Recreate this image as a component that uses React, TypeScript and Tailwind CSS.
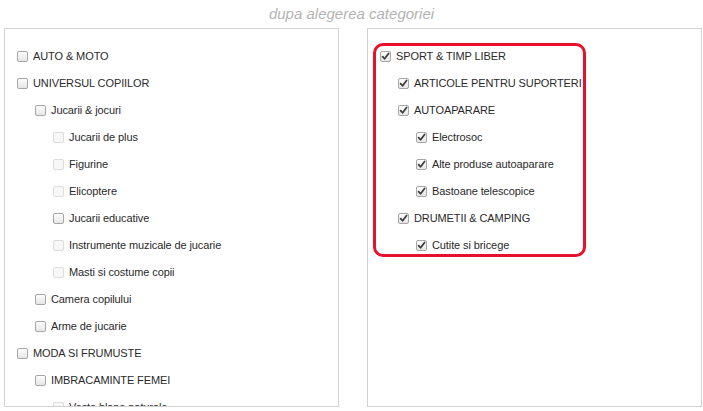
type Item = { label: string; level: number; checked?: boolean; disabled?: boolean };

const leftItems: Item[] = [
  { label: "AUTO & MOTO", level: 0 },
  { label: "UNIVERSUL COPIILOR", level: 0 },
  { label: "Jucarii & jocuri", level: 1 },
  { label: "Jucarii de plus", level: 2, disabled: true },
  { label: "Figurine", level: 2, disabled: true },
  { label: "Elicoptere", level: 2, disabled: true },
  { label: "Jucarii educative", level: 2 },
  { label: "Instrumente muzicale de jucarie", level: 2, disabled: true },
  { label: "Masti si costume copii", level: 2, disabled: true },
  { label: "Camera copilului", level: 1 },
  { label: "Arme de jucarie", level: 1 },
  { label: "MODA SI FRUMUSTE", level: 0 },
  { label: "IMBRACAMINTE FEMEI", level: 1 },
  { label: "Veste blane naturale", level: 2, disabled: true },
];

const rightItems: Item[] = [
  { label: "SPORT & TIMP LIBER", level: 0, checked: true },
  { label: "ARTICOLE PENTRU SUPORTERI", level: 1, checked: true },
  { label: "AUTOAPARARE", level: 1, checked: true },
  { label: "Electrosoc", level: 2, checked: true },
  { label: "Alte produse autoaparare", level: 2, checked: true },
  { label: "Bastoane telescopice", level: 2, checked: true },
  { label: "DRUMETII & CAMPING", level: 1, checked: true },
  { label: "Cutite si bricege", level: 2, checked: true },
];

const indent = ["pl-0", "pl-[18px]", "pl-[36px]"];

function Box({ checked, disabled }: { checked?: boolean; disabled?: boolean }) {
  return (
    <span
      className={
        "flex w-[11px] h-[11px] shrink-0 items-center justify-center rounded-[2px] border " +
        (disabled
          ? "border-[#dcdcdc] bg-[#f7f7f7]"
          : "border-[#a6a6a6] bg-gradient-to-b from-[#fcfcfc] to-[#e6e6e6] shadow-[inset_0_1px_0_#fff]")
      }
    >
      {checked && (
        <svg width="9" height="9" viewBox="0 0 9 9">
          <path d="M1.6 4.6 L3.6 6.8 L7.6 1.4" fill="none" stroke="#3a3a3a" strokeWidth="1.7" strokeLinecap="round" strokeLinejoin="round" />
        </svg>
      )}
    </span>
  );
}

function Row({ item }: { item: Item }) {
  return (
    <li className={"flex h-[27px] items-center " + indent[item.level]}>
      <Box checked={item.checked} disabled={item.disabled} />
      <span className="ml-[5px] whitespace-nowrap text-[11px] tracking-[-0.1px] text-[#2a2a2a]">{item.label}</span>
    </li>
  );
}

export default function App() {
  return (
    <div className="w-[703px] h-[411px] bg-white font-['Liberation_Sans',Arial,sans-serif]">
      <div className="flex h-[28px] items-center justify-center">
        <span className="text-[15px] italic text-[#b3b3b3]">dupa alegerea categoriei</span>
      </div>
      <div className="flex gap-[28px] pl-[4px]">
        <div className="h-[379px] w-[335px] overflow-hidden border border-[#d2d2d2] pl-[12px] pt-[14px]">
          <ul>
            {leftItems.map((it) => (
              <Row key={it.label} item={it} />
            ))}
          </ul>
        </div>
        <div className="relative h-[379px] w-[335px] overflow-hidden border border-[#d2d2d2] pl-[12px] pt-[14px]">
          <ul>
            {rightItems.map((it) => (
              <Row key={it.label} item={it} />
            ))}
          </ul>
          <div className="pointer-events-none absolute left-[5px] top-[14px] h-[214px] w-[213px] rounded-[10px] border-[3px] border-[#e8112d]" />
        </div>
      </div>
    </div>
  );
}
